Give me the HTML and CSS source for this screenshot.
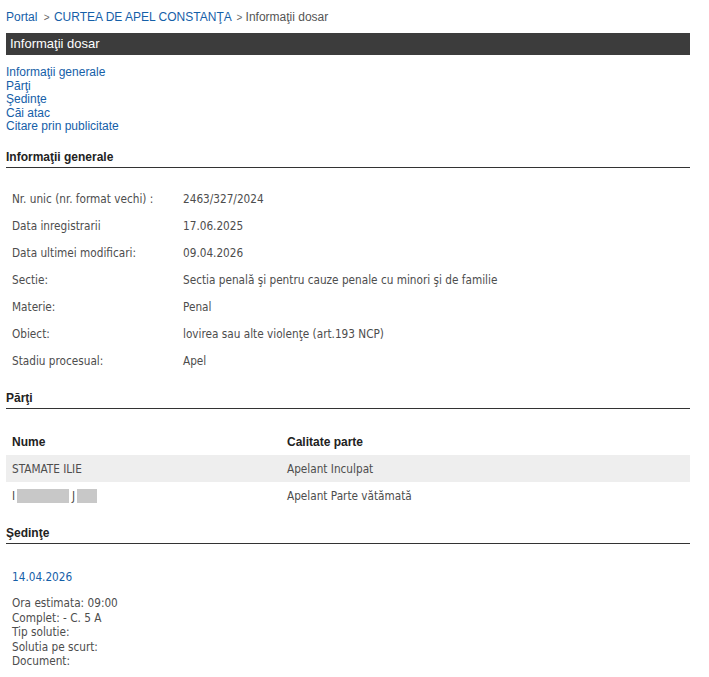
FILE: index.html
```html
<!DOCTYPE html>
<html lang="ro">
<head>
<meta charset="utf-8">
<title>Informaţii dosar</title>
<link rel="stylesheet" href="styles.css">
</head>
<body>
<div class="page">
  <div class="crumbs">
    <a class="crumb-link" href="#">Portal</a>
    <span class="sep">&gt;</span>
    <a class="crumb-link" href="#">CURTEA DE APEL CONSTANŢA</a>
    <span class="crumb-current"><span class="sep2">&gt;</span> Informaţii dosar</span>
  </div>
  <div class="titlebar">Informaţii dosar</div>
  <ul class="toc">
    <li><a href="#">Informaţii generale</a></li>
    <li><a href="#">Părţi</a></li>
    <li><a href="#">Şedinţe</a></li>
    <li><a href="#">Căi atac</a></li>
    <li><a href="#">Citare prin publicitate</a></li>
  </ul>

  <h2 class="section-head">Informaţii generale</h2>
  <div class="info">
    <div class="label">Nr. unic (nr. format vechi) :</div><div class="value">2463/327/2024</div>
    <div class="label">Data inregistrarii</div><div class="value">17.06.2025</div>
    <div class="label">Data ultimei modificari:</div><div class="value">09.04.2026</div>
    <div class="label">Sectie:</div><div class="value">Sectia penală şi pentru cauze penale cu minori şi de familie</div>
    <div class="label">Materie:</div><div class="value">Penal</div>
    <div class="label">Obiect:</div><div class="value">lovirea sau alte violenţe (art.193 NCP)</div>
    <div class="label">Stadiu procesual:</div><div class="value">Apel</div>
  </div>

  <h2 class="section-head">Părţi</h2>
  <div class="parties">
    <div class="prow phead"><div class="pname">Nume</div><div class="pcal">Calitate parte</div></div>
    <div class="prow alt"><div class="pname">STAMATE ILIE</div><div class="pcal">Apelant Inculpat</div></div>
    <div class="prow"><div class="pname">I<span class="redact r1"></span>J<span class="redact r2"></span></div><div class="pcal">Apelant Parte vătămată</div></div>
  </div>

  <h2 class="section-head">Şedinţe</h2>
  <div class="hearing">
    <div class="hdate">14.04.2026</div>
    <div class="hdetails">
      <div>Ora estimata: 09:00</div>
      <div>Complet: - C. 5 A</div>
      <div>Tip solutie:</div>
      <div>Solutia pe scurt:</div>
      <div>Document:</div>
    </div>
  </div>
</div>
</body>
</html>
```

FILE: styles.css
```css
html, body {
  margin: 0;
  padding: 0;
  background: #ffffff;
}

.page {
  width: 684px;
  margin-left: 6px;
  font-family: "Liberation Sans", Arial, sans-serif;
  font-size: 12px;
  color: #333;
}

a {
  color: #1560a8;
  text-decoration: none;
}

.crumbs {
  padding-top: 10px;
  height: 14px;
  line-height: 14px;
  color: #555;
  white-space: nowrap;
}

.sep, .sep2 {
  font-size: 10px;
  color: #666;
}

.sep {
  margin: 0 1px 0 3px;
}

.crumb-current {
  color: #555;
  margin-left: 2px;
}

.titlebar {
  margin-top: 9px;
  height: 22px;
  line-height: 21px;
  background: #3c3c3c;
  color: #fff;
  font-size: 13px;
  padding-left: 4px;
}

.toc {
  list-style: none;
  margin: 11px 0 0 0;
  padding: 0;
  line-height: 13.5px;
}

.section-head {
  margin: 0;
  font-size: 12px;
  font-weight: bold;
  color: #222;
  line-height: 14px;
  padding-bottom: 3px;
  border-bottom: 1px solid #333;
}

.toc + .section-head {
  margin-top: 16px;
}

.info {
  display: grid;
  grid-template-columns: 171px 1fr;
  grid-auto-rows: 27px;
  align-items: center;
  margin-top: 17.5px;
  padding-left: 6px;
  font-family: "DejaVu Sans Condensed", "DejaVu Sans", sans-serif;
  font-size: 11.7px;
  color: #4d4d4d;
}

.info + .section-head {
  margin-top: 17px;
}

.parties {
  margin-top: 19px;
  font-family: "DejaVu Sans Condensed", "DejaVu Sans", sans-serif;
  font-size: 11.7px;
  color: #4d4d4d;
}

.prow {
  display: flex;
  align-items: center;
  height: 27px;
  padding-left: 6px;
}

.prow.alt {
  background: #eeeeee;
}

.phead {
  font-family: "Liberation Sans", Arial, sans-serif;
  font-size: 12px;
  font-weight: bold;
  color: #222;
}

.pname {
  width: 275px;
  display: flex;
  align-items: center;
}

.redact {
  display: inline-block;
  height: 14px;
  background: #c8c8c8;
}

.r1 {
  width: 52px;
  margin: 0 3px 0 2px;
}

.r2 {
  width: 20px;
  margin-left: 2px;
}

.parties + .section-head {
  margin-top: 17px;
}

.hearing {
  padding-left: 6px;
  font-family: "DejaVu Sans Condensed", "DejaVu Sans", sans-serif;
  font-size: 11.7px;
  color: #4d4d4d;
}

.hdate {
  margin-top: 26px;
  color: #1560a8;
  line-height: 14px;
}

.hdetails {
  margin-top: 12px;
  line-height: 14.5px;
}
```
